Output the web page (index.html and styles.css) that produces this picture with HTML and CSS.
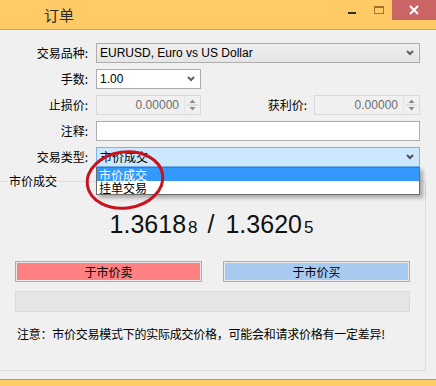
FILE: index.html
```html
<!DOCTYPE html>
<html lang="zh">
<head>
    <meta charset="UTF-8">
    <title>订单</title>
    <link rel="stylesheet" href="styles.css">
</head>
<body>
    <div class="window">
        <div class="titlebar">
            <span class="title">订单</span>
            <div class="winbtns">
                <span class="btn-min"></span>
                <span class="btn-max"></span>
                <span class="btn-close">
                    <svg width="10" height="10" viewBox="0 0 10 10"><path d="M1 1 L9 9 M9 1 L1 9" stroke="#fff" stroke-width="2"/></svg>
                </span>
            </div>
        </div>

        <div class="form">
            <label class="lbl">交易品种:</label>
            <div class="select grey">
                <span>EURUSD, Euro vs US Dollar</span>
                <svg class="chev" width="8" height="6" viewBox="0 0 8 6"><path d="M1 1 L4 4 L7 1" fill="none" stroke="#606060" stroke-width="2"/></svg>
            </div>

            <label class="lbl">手数:</label>
            <div class="ctrl-row">
                <div class="select white small">
                    <span>1.00</span>
                    <svg class="chev" width="8" height="6" viewBox="0 0 8 6"><path d="M1 1 L4 4 L7 1" fill="none" stroke="#606060" stroke-width="2"/></svg>
                </div>
            </div>

            <label class="lbl">止损价:</label>
            <div class="ctrl-row">
                <div class="spin">
                    <span class="val">0.00000</span>
                    <span class="arrows">
                        <svg width="15" height="18" viewBox="0 0 15 18"><path d="M4.5 7 L7.5 3.5 L10.5 7 Z M4.5 11 L7.5 14.5 L10.5 11 Z" fill="#8a8a8a"/><path d="M2 9 H13" stroke="#cfcfcf"/></svg>
                    </span>
                </div>
                <label class="lbl inline">获利价:</label>
                <div class="spin wide">
                    <span class="val">0.00000</span>
                    <span class="arrows">
                        <svg width="15" height="18" viewBox="0 0 15 18"><path d="M4.5 7 L7.5 3.5 L10.5 7 Z M4.5 11 L7.5 14.5 L10.5 11 Z" fill="#8a8a8a"/><path d="M2 9 H13" stroke="#cfcfcf"/></svg>
                    </span>
                </div>
            </div>

            <label class="lbl">注释:</label>
            <div class="input"></div>

            <label class="lbl">交易类型:</label>
            <div class="select active">
                <span>市价成交</span>
                <svg class="chev" width="8" height="6" viewBox="0 0 8 6"><path d="M1 1 L4 4 L7 1" fill="none" stroke="#505050" stroke-width="2"/></svg>
            </div>
        </div>

        <div class="group">
            <span class="legend">市价成交</span>
            <div class="price">
                <span>1.3618<small>8</small></span>
                <span class="slash">/</span>
                <span>1.3620<small>5</small></span>
            </div>
            <div class="actions">
                <div class="trade sell">于市价卖</div>
                <div class="trade buy">于市价买</div>
            </div>
            <div class="progress"></div>
            <p class="note">注意：市价交易模式下的实际成交价格，可能会和请求价格有一定差异!</p>
        </div>

        <div class="bottombar"></div>

        <!-- open dropdown list of the order type select -->
        <ul class="dropdown">
            <li class="on">市价成交</li>
            <li>挂单交易</li>
        </ul>

        <svg class="mark" width="90" height="70" viewBox="0 0 90 70">
            <ellipse cx="45" cy="34" rx="38" ry="28" fill="none" stroke="#c8121c" stroke-width="3" transform="rotate(-8 45 34)"/>
        </svg>
    </div>
</body>
</html>
```

FILE: styles.css
```css
* {
    margin: 0;
    padding: 0;
    box-sizing: border-box;
}

body {
    background-color: #f0f0f0;
    font-family: "Liberation Sans", "Noto Sans CJK SC", sans-serif;
    font-size: 12px;
    color: #000;
    overflow: hidden;
}

.window {
    position: relative;
    width: 436px;
    height: 386px;
}

.titlebar {
    height: 30px;
    background-color: #ffcb67;
    border-bottom: 1px solid #d7a35c;
    display: flex;
    align-items: flex-start;
}

.title {
    font-family: "Noto Sans CJK SC", sans-serif;
    font-size: 15px;
    line-height: 15px;
    color: #2b2b2b;
    margin: 7px 0 0 44px;
}

.winbtns {
    margin-left: auto;
    display: flex;
    align-items: flex-start;
}

.btn-min {
    width: 8px;
    height: 2px;
    background: #2d2d2d;
    margin: 12px 0 0 0;
}

.btn-max {
    width: 10px;
    height: 8px;
    border: 1px solid #a86c2c;
    border-top-width: 2px;
    margin: 6px 0 0 18px;
}

.btn-close {
    width: 44px;
    height: 20px;
    background: #c96565;
    margin-left: 8px;
    display: flex;
    align-items: center;
    justify-content: center;
}

/* form rows */
.form {
    display: grid;
    grid-template-columns: 88px 324px;
    column-gap: 8px;
    row-gap: 6px;
    padding-top: 13px;
}

.lbl {
    font-family: "Noto Sans CJK SC", sans-serif;
    font-size: 12px;
    line-height: 20px;
    text-align: right;
    height: 20px;
}

.select,
.input,
.spin {
    height: 20px;
    border: 1px solid #adadad;
    display: flex;
    align-items: center;
    padding-left: 3px;
    line-height: 18px;
}

.select .chev {
    margin-left: auto;
    margin-right: 5px;
}

.select.grey {
    background: linear-gradient(#efefef, #e5e5e5);
}

.select.white,
.input {
    background: #fff;
}

.select.small {
    width: 105px;
}

.select.active {
    background: #cce8ff;
    border-color: #7eb4ea;
    font-family: "Noto Sans CJK SC", sans-serif;
}

.ctrl-row {
    display: flex;
    align-items: center;
}

.spin {
    width: 105px;
    background: #f0f0f0;
    border-color: #d9d9d9;
    padding-left: 0;
}

.spin.wide {
    width: 106px;
}

.spin .val {
    flex: 1;
    text-align: right;
    color: #6d6d6d;
    padding-right: 5px;
}

.spin .arrows {
    width: 16px;
    height: 18px;
    display: flex;
    align-items: center;
    justify-content: center;
    border-left: 1px solid #e4e4e4;
}

.lbl.inline {
    flex: 1;
    padding-right: 7px;
}

/* market execution group */
.group {
    margin: 14px 0 0 -1px;
    width: 427px;
    height: 190px;
    border: 1px solid #dcdcdc;
    padding: 0 15px 0 15px;
}

.legend {
    display: block;
    width: fit-content;
    margin: -8px 0 0 -8px;
    padding: 0 2px;
    background: #f0f0f0;
    font-family: "Noto Sans CJK SC", sans-serif;
    font-size: 12px;
    line-height: 14px;
}

.price {
    margin-top: 22px;
    display: flex;
    justify-content: center;
    align-items: baseline;
    font-size: 25px;
    line-height: 29px;
    color: #111;
    padding-right: 2px;
}

.price small {
    font-size: 17px;
    margin-left: 2px;
}

.price .slash {
    margin: 0 11px 0 10px;
}

.actions {
    display: flex;
    justify-content: space-between;
    margin-top: 19px;
}

.trade {
    width: 187px;
    height: 21px;
    border: 1px solid #adadad;
    box-shadow: inset 0 0 0 1px #e8e8e8;
    font-family: "Noto Sans CJK SC", sans-serif;
    font-size: 12px;
    line-height: 19px;
    text-align: center;
}

.trade.sell {
    background: #ff8080;
}

.trade.buy {
    background: #a6caf0;
}

.progress {
    margin-top: 9px;
    height: 21px;
    background: #e6e6e6;
    border: 1px solid #dadada;
}

.note {
    margin: 15px 0 0 2px;
    font-family: "Noto Sans CJK SC", sans-serif;
    font-size: 12px;
    line-height: 14px;
    letter-spacing: -0.25px;
}

.bottombar {
    margin-top: 8px;
    height: 8px;
    background: #ffcb67;
    border-top: 1px solid #a89a85;
}

/* overlays */
.dropdown {
    position: absolute;
    left: 96px;
    top: 167px;
    width: 324px;
    list-style: none;
    background: #fff;
    border: 1px solid #6d6d6d;
    box-shadow: 3px 3px 4px rgba(0, 0, 0, 0.3);
    font-family: "Noto Sans CJK SC", sans-serif;
    font-size: 12px;
}

.dropdown li {
    height: 13px;
    line-height: 13px;
    padding-left: 2px;
}

.dropdown li.on {
    background: #3399ff;
    color: #fff;
}

.mark {
    position: absolute;
    left: 80px;
    top: 146px;
}
```
